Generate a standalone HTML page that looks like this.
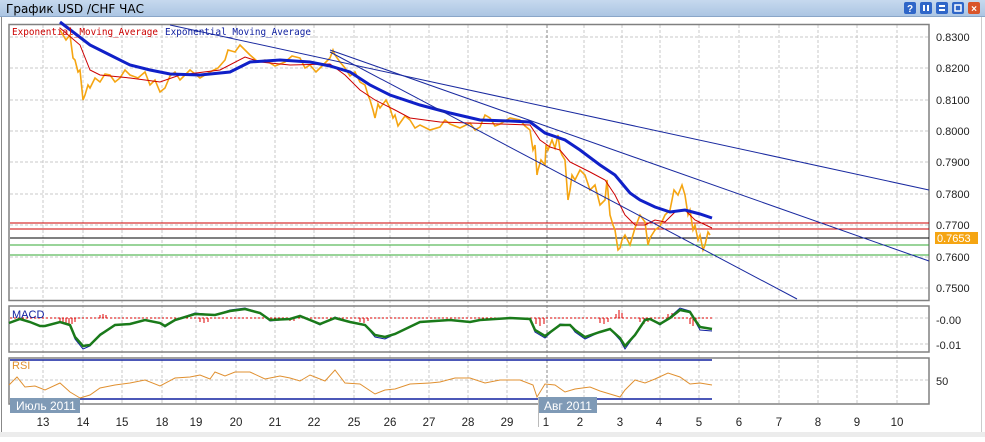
<!DOCTYPE html>
<html><head><meta charset="utf-8"><style>
body{margin:0;width:985px;height:437px;overflow:hidden;background:#fff;font-family:"Liberation Sans","DejaVu Sans",sans-serif}
</style></head><body>
<svg width="985" height="437" xmlns="http://www.w3.org/2000/svg" font-family="Liberation Sans, DejaVu Sans, sans-serif">
<defs><linearGradient id="tb" x1="0" y1="0" x2="0" y2="1"><stop offset="0" stop-color="#c6d9ee"/><stop offset="1" stop-color="#aac4e2"/></linearGradient></defs>
<rect x="0" y="0" width="985" height="437" fill="#fff"/>
<rect x="0" y="432" width="985" height="5" fill="#ececec"/>
<rect x="0" y="0" width="985" height="17" fill="url(#tb)"/>
<line x1="0" y1="16.5" x2="985" y2="16.5" stroke="#8aa6c8"/>
<text x="6" y="13" font-size="12" fill="#000" textLength="138" font-family="DejaVu Sans, sans-serif">График USD /CHF  ЧАС</text>
<line x1="1.5" y1="17" x2="1.5" y2="432" stroke="#888"/>
<line x1="981.5" y1="17" x2="981.5" y2="432" stroke="#ccc"/>
<g>
<rect x="904" y="2" width="12" height="12" rx="2" fill="#2f66c8"/><text x="910" y="12" font-size="10" fill="#fff" text-anchor="middle" font-weight="bold">?</text>
<rect x="920" y="2" width="12" height="12" rx="2" fill="#2f66c8"/><rect x="923" y="5" width="2" height="6" fill="#fff"/><rect x="927" y="5" width="2" height="6" fill="#fff"/>
<rect x="936" y="2" width="12" height="12" rx="2" fill="#2f66c8"/><rect x="939" y="5" width="6" height="2" fill="#fff"/><rect x="939" y="9" width="6" height="2" fill="#fff"/>
<rect x="952" y="2" width="12" height="12" rx="2" fill="#2f66c8"/><rect x="955" y="5" width="6" height="6" fill="none" stroke="#fff" stroke-width="1.5"/>
<rect x="968" y="2" width="12" height="12" rx="2" fill="#d9552a"/><text x="974" y="12" font-size="10" fill="#fff" text-anchor="middle" font-weight="bold">×</text>
</g>
<g stroke="#c8c8c8" stroke-dasharray="3,2">
<line x1="43" y1="25" x2="43" y2="405"/><line x1="83" y1="25" x2="83" y2="405"/><line x1="122" y1="25" x2="122" y2="405"/><line x1="162" y1="25" x2="162" y2="405"/><line x1="196" y1="25" x2="196" y2="405"/><line x1="236" y1="25" x2="236" y2="405"/><line x1="275" y1="25" x2="275" y2="405"/><line x1="314" y1="25" x2="314" y2="405"/><line x1="354" y1="25" x2="354" y2="405"/><line x1="390" y1="25" x2="390" y2="405"/><line x1="429" y1="25" x2="429" y2="405"/><line x1="468" y1="25" x2="468" y2="405"/><line x1="507" y1="25" x2="507" y2="405"/><line x1="584" y1="25" x2="584" y2="405"/><line x1="622" y1="25" x2="622" y2="405"/><line x1="660" y1="25" x2="660" y2="405"/><line x1="699" y1="25" x2="699" y2="405"/><line x1="739" y1="25" x2="739" y2="405"/><line x1="779" y1="25" x2="779" y2="405"/><line x1="818" y1="25" x2="818" y2="405"/><line x1="857" y1="25" x2="857" y2="405"/><line x1="897" y1="25" x2="897" y2="405"/>
<line x1="10" y1="37" x2="929" y2="37"/><line x1="10" y1="68" x2="929" y2="68"/><line x1="10" y1="100" x2="929" y2="100"/><line x1="10" y1="131" x2="929" y2="131"/><line x1="10" y1="162" x2="929" y2="162"/><line x1="10" y1="194" x2="929" y2="194"/><line x1="10" y1="225" x2="929" y2="225"/><line x1="10" y1="257" x2="929" y2="257"/><line x1="10" y1="288" x2="929" y2="288"/>
<line x1="10" y1="318" x2="929" y2="318"/><line x1="10" y1="344" x2="929" y2="344"/><line x1="10" y1="380" x2="929" y2="380"/>
</g>
<line x1="547" y1="25" x2="547" y2="412" stroke="#888" stroke-dasharray="3,2"/>
<g fill="none" stroke="#808080" stroke-width="1.5">
<rect x="9" y="24.5" width="920" height="276"/>
<rect x="9" y="306" width="920" height="46"/>
<rect x="9" y="358" width="920" height="46"/>
</g>
<g font-size="11" fill="#222">
<text x="936" y="41">0.8300</text><text x="936" y="72">0.8200</text><text x="936" y="104">0.8100</text><text x="936" y="135">0.8000</text><text x="936" y="166">0.7900</text><text x="936" y="198">0.7800</text><text x="936" y="229">0.7700</text><text x="936" y="261">0.7600</text><text x="936" y="292">0.7500</text>
<text x="936" y="324">-0.00</text><text x="936" y="349">-0.01</text><text x="936" y="385">50</text>
</g>
<rect x="935" y="232" width="43" height="12" fill="#f5a512"/><text x="937" y="242" font-size="11" fill="#fff">0.7653</text>
<line x1="10" y1="223" x2="929" y2="223" stroke="#c00"/>
<line x1="10" y1="229" x2="929" y2="229" stroke="#c00"/>
<line x1="10" y1="238" x2="929" y2="238" stroke="#000"/>
<line x1="10" y1="245" x2="929" y2="245" stroke="#3a3"/>
<line x1="10" y1="255" x2="929" y2="255" stroke="#3a3"/>
<polyline fill="none" stroke="#f5a512" stroke-width="1.6" points="60,30 66,40 70,35 73,58 75,60 78,72 80,70 83,100 85,95 88,85 90,88 95,78 100,82 105,74 110,75 115,82 120,78 125,70 130,75 138,78 145,72 150,85 155,80 160,92 165,88 170,76 175,72 180,80 190,70 200,78 210,72 218,68 225,60 228,50 235,52 240,45 250,55 258,62 265,60 275,66 285,62 292,56 300,58 305,68 310,65 316,72 320,68 326,62 330,58 333,50 335,55 340,62 345,68 350,76 355,72 360,82 365,85 368,95 370,100 373,110 375,118 378,104 380,108 386,100 390,108 393,118 395,115 398,126 400,123 405,116 410,120 415,128 420,125 430,130 440,127 445,120 450,124 460,128 470,123 475,130 480,127 485,115 490,118 495,126 500,124 510,118 520,120 525,126 530,130 533,150 535,145 537,175 538,170 541,160 545,165 546,145 548,150 552,140 555,148 558,135 560,150 562,155 565,160 568,200 570,190 572,175 575,180 580,170 585,175 590,190 595,185 600,205 605,200 607,180 610,215 613,225 615,230 618,250 620,248 622,240 625,235 630,245 635,228 640,215 645,222 648,245 650,238 655,230 660,226 665,215 670,210 674,190 678,195 682,185 685,195 688,215 690,210 693,230 695,225 698,240 700,235 703,250 705,245 708,232 710,235"/>
<polyline fill="none" stroke="#c00" stroke-width="1" points="60,28 80,45 90,70 100,75 130,78 160,82 180,75 220,70 245,57 260,62 290,65 330,64 345,75 360,90 375,100 395,110 410,118 440,122 500,124 530,125 540,140 550,147 560,150 570,162 590,172 605,180 615,195 625,215 635,225 645,225 655,220 665,222 675,212 685,210 695,220 712,228"/>
<polyline fill="none" stroke="#1020c8" stroke-width="3" points="60,22 90,45 110,55 130,65 150,70 170,74 200,75 230,72 250,62 280,60 310,62 330,66 350,72 370,85 390,95 420,105 450,113 480,120 510,121 530,122 545,133 565,140 580,150 600,165 615,175 630,193 640,200 655,207 670,212 685,210 700,214 712,218"/>
<g stroke="#1a2aa0" stroke-width="1">
<line x1="170" y1="25" x2="929" y2="190"/>
<line x1="330" y1="50" x2="929" y2="261"/>
<line x1="330" y1="52" x2="797" y2="299"/>
</g>
<text x="12" y="35" font-size="10" fill="#c00" font-family="DejaVu Sans Mono, Liberation Mono, monospace" textLength="146" lengthAdjust="spacingAndGlyphs">Exponential_Moving_Average</text>
<text x="165" y="35" font-size="10" fill="#1020a0" font-family="DejaVu Sans Mono, Liberation Mono, monospace" textLength="146" lengthAdjust="spacingAndGlyphs">Exponential_Moving_Average</text>
<line x1="10" y1="318" x2="712" y2="318" stroke="#d00" stroke-dasharray="2,2"/>
<g stroke="#d00" stroke-width="1">
<path d="M60 318v4M63 318v5M66 318v6M69 318v7M72 318v6M75 318v4M100 318v-3M103 318v-4M106 318v-3M200 318v4M204 318v5M208 318v4M290 318v3M294 318v3M360 318v4M364 318v5M368 318v3M536 318v6M540 318v8M544 318v6M600 318v5M604 318v6M608 318v4M616 318v-4M619 318v-8M622 318v-5M640 318v4M644 318v6M648 318v4M668 318v-4M672 318v-5M690 318v6M693 318v8M696 318v5"/>
</g>
<polyline fill="none" stroke="#1020a0" stroke-width="1" points="9,323 20,319 30,322 40,326 45,326 60,322 70,325 75,339 83,349 90,346 100,334 115,325 130,324 145,320 160,323 165,327 175,320 195,313 215,315 230,310 245,308 260,313 270,321 290,319 300,316 320,325 335,317 350,322 365,325 375,337 385,339 395,334 420,322 450,320 470,322 480,320 510,318 530,319 535,332 545,338 560,324 570,325 575,332 585,339 600,332 610,329 620,340 625,349 635,335 645,319 650,319 660,325 670,317 680,308 690,311 695,321 700,330 712,331"/>
<polyline fill="none" stroke="#1a7a1a" stroke-width="2.5" points="9,323 20,319 30,322 40,326 45,326 60,322 70,325 75,337 83,346 90,345 100,335 115,325 130,324 145,320 160,323 165,326 175,320 195,314 215,315 230,311 245,309 260,313 270,320 290,319 300,316 320,324 335,318 350,322 365,325 375,335 385,337 395,334 420,322 450,320 470,322 480,320 510,318 530,319 535,330 545,336 560,325 570,325 575,330 585,337 600,332 610,329 620,338 625,346 635,335 645,320 650,319 660,324 670,318 680,310 690,312 695,320 700,327 712,329"/>
<text x="12" y="318" font-size="11" fill="#1020a0">MACD</text>
<line x1="10" y1="360" x2="712" y2="360" stroke="#1020a0" stroke-width="1.5"/>
<line x1="10" y1="399" x2="712" y2="399" stroke="#1020a0" stroke-width="1.5"/>
<polyline fill="none" stroke="#e09030" stroke-width="1" points="9,385 17,377 25,387 35,386 45,390 60,383 70,392 80,398 90,395 100,388 115,385 130,383 145,380 160,386 175,378 190,377 200,375 210,379 215,372 225,376 235,372 250,372 265,379 280,376 290,378 300,381 310,375 325,381 335,370 345,383 360,384 375,394 385,390 395,389 410,384 430,383 440,382 455,378 470,378 485,383 500,380 520,380 533,385 537,397 545,384 555,385 565,392 575,389 590,387 600,391 610,394 620,397 625,390 635,380 645,383 655,379 668,373 680,377 690,384 700,383 712,385"/>
<text x="12" y="369" font-size="11" fill="#e09030">RSI</text>
<rect x="10" y="398" width="70" height="15" fill="#7f9ab6"/><text x="16" y="410" font-size="12" fill="#fff">Июль 2011</text>
<rect x="539" y="397" width="58" height="16" fill="#7f9ab6"/><text x="544" y="410" font-size="12" fill="#fff">Авг 2011</text>
<line x1="538.5" y1="397" x2="538.5" y2="427" stroke="#bbb"/>
<g font-size="11.5" fill="#222" text-anchor="middle">
<text x="43" y="426">13</text><text x="83" y="426">14</text><text x="122" y="426">15</text><text x="162" y="426">18</text><text x="196" y="426">19</text><text x="236" y="426">20</text><text x="275" y="426">21</text><text x="314" y="426">22</text><text x="354" y="426">25</text><text x="390" y="426">26</text><text x="429" y="426">27</text><text x="468" y="426">28</text><text x="507" y="426">29</text><text x="546" y="426">1</text><text x="580" y="426">2</text><text x="620" y="426">3</text><text x="659" y="426">4</text><text x="699" y="426">5</text><text x="739" y="426">6</text><text x="779" y="426">7</text><text x="818" y="426">8</text><text x="857" y="426">9</text><text x="897" y="426">10</text>
</g>
</svg>
</body></html>
